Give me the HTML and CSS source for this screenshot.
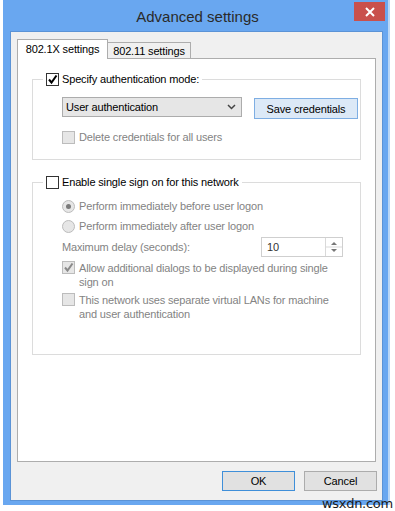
FILE: index.html
```html
<!DOCTYPE html>
<html>
<head>
<meta charset="utf-8">
<link rel="stylesheet" href="styles.css">
</head>
<body>
<div class="window">
  <div class="titlebar">
    <span class="title">Advanced settings</span>
    <span class="close"><svg width="10" height="10" viewBox="0 0 10 10"><path d="M1 1L9 9M9 1L1 9" stroke="#fff" stroke-width="2"/></svg></span>
  </div>
  <div class="content">
    <div class="tabs">
      <div class="tab active">802.1X settings</div>
      <div class="tab">802.11 settings</div>
    </div>
    <div class="panel">
      <div class="group g1">
        <div class="legend">
          <span class="cb on checked"><svg width="11" height="11" viewBox="0 0 11 11"><path d="M2 5.5L4.5 8.5L9.5 1.5" fill="none" stroke="#000" stroke-width="2"/></svg></span>
          <span class="lbl">Specify authentication mode:</span>
        </div>
        <div class="row-auth">
          <div class="select"><span>User authentication</span><svg width="9" height="6" viewBox="0 0 9 6"><path d="M1 1L4.5 4.5L8 1" fill="none" stroke="#444" stroke-width="1.5"/></svg></div>
          <div class="btn save">Save credentials</div>
        </div>
        <div class="opt dis row-del">
          <span class="cb"></span>
          <span class="lbl">Delete credentials for all users</span>
        </div>
      </div>
      <div class="group g2">
        <div class="legend">
          <span class="cb on"></span>
          <span class="lbl">Enable single sign on for this network</span>
        </div>
        <div class="opt dis r1">
          <span class="radio sel"></span>
          <span class="lbl">Perform immediately before user logon</span>
        </div>
        <div class="opt dis r2">
          <span class="radio"></span>
          <span class="lbl">Perform immediately after user logon</span>
        </div>
        <div class="delay dis">
          <span class="lbl">Maximum delay (seconds):</span>
          <div class="spin"><span class="val">10</span><span class="arrows"><svg width="16" height="18" viewBox="0 0 16 18"><path d="M5 7L8 4L11 7Z" fill="#777"/><path d="M5 11L8 14L11 11Z" fill="#777"/><path d="M0 9H16" stroke="#d9d9d9"/></svg></span></div>
        </div>
        <div class="opt dis multi c1">
          <span class="cb"><svg width="11" height="11" viewBox="0 0 11 11"><path d="M2 5.5L4.5 8.5L9.5 1.5" fill="none" stroke="#8a8a8a" stroke-width="2"/></svg></span>
          <span class="lbl">Allow additional dialogs to be displayed during single<br>sign on</span>
        </div>
        <div class="opt dis multi c2">
          <span class="cb"></span>
          <span class="lbl">This network uses separate virtual LANs for machine<br>and user authentication</span>
        </div>
      </div>
    </div>
    <div class="footer">
      <div class="btn ok">OK</div>
      <div class="btn cancel">Cancel</div>
    </div>
  </div>
</div>
<div class="watermark">wsxdn.com</div>
</body>
</html>
```
FILE: styles.css
```css
html, body {
  margin: 0;
  padding: 0;
  background: #ffffff;
  font-family: "Liberation Sans", Arial, sans-serif;
  font-size: 11px;
  letter-spacing: -0.15px;
  color: #000;
}
body {
  width: 395px;
  height: 511px;
  overflow: hidden;
  position: relative;
}
.window {
  margin-left: 3px;
  width: 385px;
  height: 505px;
  box-sizing: border-box;
  background: #69a7f0;
  padding: 0 5px 5px 7px;
  display: flex;
  flex-direction: column;
  position: relative;
  box-shadow: 2px 0 0 #b9d6f6;
}
.titlebar {
  height: 31px;
  flex: none;
  display: flex;
  align-items: center;
  justify-content: center;
}
.title {
  font-size: 15px;
  letter-spacing: 0;
  color: #2a2a2a;
  margin-left: 2px;
  margin-top: 1px;
}
.close {
  position: absolute;
  top: 2px;
  right: 3px;
  width: 31px;
  height: 19px;
  background: #c9504c;
  display: flex;
  align-items: center;
  justify-content: center;
}
.content {
  flex: 1;
  background: #f0f0f0;
  border: 1px solid #5b93d6;
  padding: 7px 6px 0 6px;
  display: flex;
  flex-direction: column;
}
.tabs {
  display: flex;
  align-items: flex-end;
  height: 20px;
  flex: none;
}
.tab {
  box-sizing: border-box;
  border: 1px solid #adadad;
  border-bottom: none;
  height: 17px;
  padding: 0 4px;
  display: flex;
  align-items: center;
  background: #f0f0f0;
  width: 84px;
  margin-left: -1px;
  justify-content: center;
}
.tab.active {
  position: relative;
  z-index: 1;
  height: 20px;
  background: #fff;
  width: 91px;
  margin-left: 0;
  padding-bottom: 2px;
}
.panel {
  margin-top: -1px;
  height: 404px;
  box-sizing: border-box;
  border: 1px solid #adadad;
  background: #fff;
  display: flex;
  flex-direction: column;
}
.group {
  border: 1px solid #dcdcdc;
  margin: 0 14px;
  display: flex;
  flex-direction: column;
  padding-left: 29px;
}
.g1 {
  margin-top: 20px;
  padding-bottom: 15px;
}
.g2 {
  margin-top: 22px;
  height: 173px;
  box-sizing: border-box;
}
.legend {
  height: 16px;
  margin-top: -9px;
  margin-left: -19px;
  align-self: flex-start;
  background: #fff;
  padding: 0 3px;
  display: flex;
  align-items: center;
  gap: 3px;
}
.cb {
  width: 13px;
  height: 13px;
  box-sizing: border-box;
  border: 1px solid #bcbcbc;
  background: #e6e6e6;
  display: flex;
  align-items: center;
  justify-content: center;
  flex: none;
}
.cb.on {
  border-color: #333;
  background: #fff;
}
.radio {
  width: 13px;
  height: 13px;
  box-sizing: border-box;
  border: 1px solid #bcbcbc;
  background: #e6e6e6;
  border-radius: 50%;
  display: flex;
  align-items: center;
  justify-content: center;
  flex: none;
}
.radio.sel::after {
  content: "";
  width: 5px;
  height: 5px;
  border-radius: 50%;
  background: #7a7a7a;
}
.row-auth {
  display: flex;
  margin-top: 10px;
  gap: 12px;
}
.select {
  width: 180px;
  height: 20px;
  box-sizing: border-box;
  border: 1px solid #acacac;
  background: #e6e6e6;
  display: flex;
  align-items: center;
  justify-content: space-between;
  padding: 0 5px 0 3px;
}
.btn {
  box-sizing: border-box;
  border: 1px solid #acacac;
  background: #e1e1e1;
  display: flex;
  align-items: center;
  justify-content: center;
}
.save {
  width: 104px;
  height: 21px;
  margin-top: 1px;
  background: #dce9f7;
  border-color: #7eaee3;
}
.opt {
  display: flex;
  align-items: center;
  gap: 4px;
  height: 14px;
}
.dis {
  color: #838383;
}
.row-del {
  margin-top: 11px;
}
.r1 {
  margin-top: 9px;
}
.r2 {
  margin-top: 6px;
}
.delay {
  margin-top: 4px;
  height: 20px;
  display: flex;
  align-items: center;
  justify-content: space-between;
  padding-right: 17px;
}
.spin {
  width: 82px;
  height: 20px;
  box-sizing: border-box;
  border: 1px solid #cfcfcf;
  display: flex;
  align-items: center;
  justify-content: space-between;
  padding-left: 5px;
  background: #fff;
  color: #333;
}
.arrows {
  width: 16px;
  height: 18px;
  border-left: 1px solid #d9d9d9;
  display: flex;
}
.multi {
  height: auto;
  align-items: flex-start;
  line-height: 14px;
}
.c1 {
  margin-top: 4px;
}
.c2 {
  margin-top: 4px;
}
.footer {
  flex: none;
  display: flex;
  justify-content: flex-end;
  gap: 9px;
  padding: 9px 0 9px 0;
  margin-right: -1px;
}
.footer .btn {
  width: 73px;
  height: 20px;
}
.ok {
  border-color: #3f8fd9;
}
.watermark {
  position: absolute;
  left: 322px;
  top: 496px;
  font-size: 13px;
  color: #1a1a1a;
  font-family: "DejaVu Sans", sans-serif;
  letter-spacing: -0.3px;
}
```
